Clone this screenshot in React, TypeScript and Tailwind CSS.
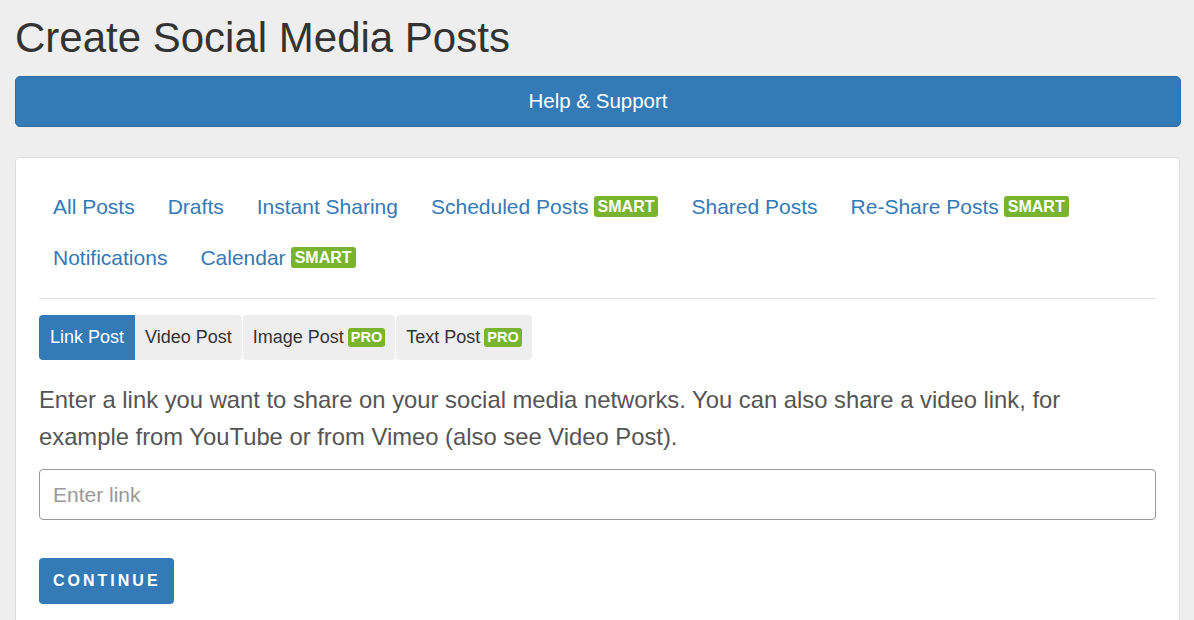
import React from 'react';

const navItems: { label: string; smart?: boolean }[] = [
  { label: 'All Posts' },
  { label: 'Drafts' },
  { label: 'Instant Sharing' },
  { label: 'Scheduled Posts', smart: true },
  { label: 'Shared Posts' },
  { label: 'Re-Share Posts', smart: true },
  { label: 'Notifications' },
  { label: 'Calendar', smart: true },
];

const SmartBadge = () => (
  <span className="ml-[5px] inline-block rounded-[3px] bg-[#79b42f] px-[4px] text-[16px] font-bold leading-[21px] text-white">
    SMART
  </span>
);

const ProBadge = () => (
  <span className="ml-[4px] inline-block rounded-[3px] bg-[#79b42f] px-[3px] text-[14.5px] font-bold leading-[19px] text-white">
    PRO
  </span>
);

const App: React.FC = () => {
  return (
    <div
      className="min-h-[620px] bg-[#eeeeee] px-[15px] pb-6"
      style={{ fontFamily: '"Liberation Sans", Arial, sans-serif' }}
    >
      <h1 className="pt-[15px] text-[42px] leading-[46px] text-[#333333]">Create Social Media Posts</h1>

      <button className="mt-[15px] block h-[51px] w-[1166px] rounded-[5px] border border-[#2e6da4] bg-[#337ab7] text-[20.5px] text-white">
        Help &amp; Support
      </button>

      <div className="mt-[30px] w-[1165px] rounded-[4px] border border-[#dddddd] bg-white px-[23px] pt-[23px] pb-[40px]">
        {/* main nav */}
        <ul className="flex flex-wrap gap-x-[5px]">
          {navItems.map((item) => (
            <li key={item.label}>
              <a className="flex items-center px-[14px] py-[10px] text-[21px] leading-[31px] text-[#337ab7]">
                {item.label}
                {item.smart && <SmartBadge />}
              </a>
            </li>
          ))}
        </ul>

        <hr className="mt-[15px] border-t border-[#e2e2e2]" />

        {/* post type tabs */}
        <div className="mt-[16px] flex text-[18px] leading-[25px]">
          <button className="rounded-l-[4px] bg-[#337ab7] px-[11px] py-[10px] text-white">Link Post</button>
          <button className="rounded-r-[4px] bg-[#eeeeee] px-[10px] py-[10px] text-[#333333]">Video Post</button>
          <button className="ml-px flex items-center rounded-[4px] bg-[#eeeeee] px-[10px] py-[10px] text-[#333333]">
            Image Post
            <ProBadge />
          </button>
          <button className="ml-px flex items-center rounded-[4px] bg-[#eeeeee] px-[10px] py-[10px] text-[#333333]">
            Text Post
            <ProBadge />
          </button>
        </div>

        <p className="mt-[21px] text-[23.8px] leading-[37px] text-[#555555]">
          Enter a link you want to share on your social media networks. You can also share a video link, for example
          from YouTube or from Vimeo (also see Video Post).
        </p>

        <input
          type="text"
          placeholder="Enter link"
          className="mt-[14px] block h-[51px] w-full rounded-[4px] border border-[#999999] px-[13px] text-[21px] text-[#555555] placeholder:text-[#999999] outline-none"
        />

        <button className="mt-[38px] h-[46px] rounded-[4px] bg-[#337ab7] pl-[14px] pr-[13px] text-[16px] font-bold tracking-[3px] text-white">
          CONTINUE
        </button>
      </div>
    </div>
  );
};

export default App;
